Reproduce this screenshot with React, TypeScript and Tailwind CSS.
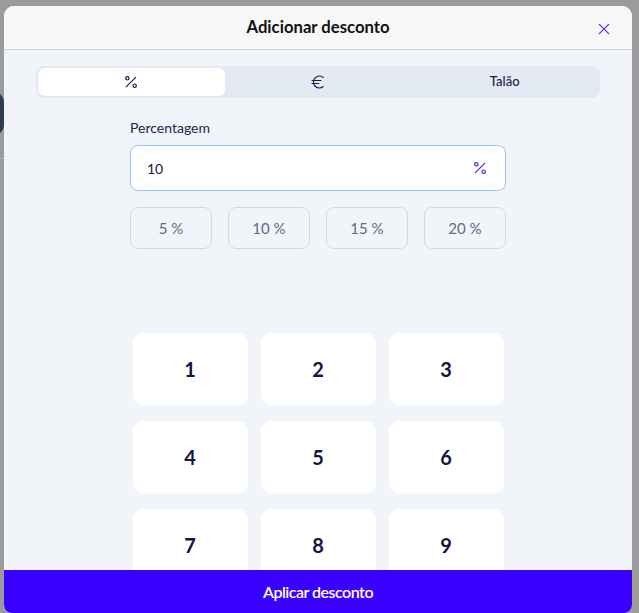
import React from "react";

const PercentIcon = ({ className }: { className?: string }) => (
  <svg viewBox="0 0 24 24" fill="none" stroke="currentColor" strokeWidth="1.8" strokeLinecap="round" strokeLinejoin="round" className={className}>
    <line x1="19" y1="5" x2="5" y2="19" />
    <circle cx="6.5" cy="6.5" r="2.5" />
    <circle cx="17.5" cy="17.5" r="2.5" />
  </svg>
);

const EuroIcon = ({ className }: { className?: string }) => (
  <svg viewBox="0 0 24 24" fill="none" stroke="currentColor" strokeWidth="1.5" strokeLinecap="round" strokeLinejoin="round" className={className}>
    <path d="M4 10h12" />
    <path d="M4 14h9" />
    <path d="M19 6a7.7 7.7 0 0 0-5.2-2A7.9 7.9 0 0 0 6 12c0 4.4 3.5 8 7.8 8 2 0 3.8-.8 5.2-2" />
  </svg>
);

const XIcon = ({ className }: { className?: string }) => (
  <svg viewBox="0 0 24 24" fill="none" stroke="currentColor" strokeWidth="1.6" strokeLinecap="round" className={className}>
    <path d="M5 5l14 14M19 5L5 19" />
  </svg>
);

export default function App() {
  const presets = ["5 %", "10 %", "15 %", "20 %"];
  const keys = ["1", "2", "3", "4", "5", "6", "7", "8", "9"];
  return (
    <div
      className="relative w-[639px] h-[613px] overflow-hidden bg-[#9b9b9b]"
      style={{ fontFamily: "Lato, 'Noto Sans', sans-serif" }}
    >
      {/* background content peeking at left */}
      <div className="absolute left-[-20px] top-[92px] w-[24px] h-[43px] rounded-[10px] bg-[#2f3d50]" />
      <div className="absolute left-0 top-[158px] w-[4px] h-[1px] bg-[#b5b5b5]" />

      <div className="absolute left-[4px] top-[6px] w-[628px] h-[607px] rounded-t-[10px] rounded-b-[8px] overflow-hidden flex flex-col bg-[#f1f4f9]">
        {/* header */}
        <div className="relative h-[44px] shrink-0 flex items-center justify-center bg-[#f7f7f7] border-b border-[#cfd2d6]">
          <span className="text-[16.7px] font-bold text-[#111111]">Adicionar desconto</span>
          <XIcon className="absolute right-[20px] top-[15px] w-[16px] h-[16px] text-[#4b1cff]" />
        </div>

        {/* body */}
        <div className="flex-1 overflow-hidden px-8 pt-4">
          <div className="flex h-[32px] rounded-[8px] bg-[#e4eaf3] p-[2px]">
            <div className="flex-1 flex items-center justify-center rounded-[6px] bg-white shadow-[0_0_1px_rgba(0,0,0,0.15)] text-[#1b1b47]">
              <PercentIcon className="w-[16px] h-[16px]" />
            </div>
            <div className="flex-1 flex items-center justify-center text-[#1b1b47]">
              <EuroIcon className="w-[18px] h-[18px]" />
            </div>
            <div className="flex-1 flex items-center justify-center text-[13px] font-medium text-[#1b1b47]">
              Talão
            </div>
          </div>

          <div className="w-[376px] mx-auto">
            <div className="mt-[20px] h-[20px] text-[14px] leading-[20px] text-[#24244a]">Percentagem</div>
            <div className="mt-[7px] h-[46px] flex items-center justify-between rounded-[8px] border border-[#9cc3f5] bg-white pl-[16px] pr-[17px]">
              <span className="text-[14px] text-[#1b1b3a]">10</span>
              <PercentIcon className="w-[16px] h-[16px] text-[#4b1cff]" />
            </div>
            <div className="mt-[16px] grid grid-cols-4 gap-[16px]">
              {presets.map((p) => (
                <div
                  key={p}
                  className="h-[42px] flex items-center justify-center rounded-[8px] border border-[#d5dae2] text-[15px] text-[#5d6c83]"
                >
                  {p}
                </div>
              ))}
            </div>
          </div>

          <div className="w-[371px] mx-auto mt-[84px] grid grid-cols-3 gap-x-[13px] gap-y-[16px]">
            {keys.map((k) => (
              <div
                key={k}
                className="h-[72px] flex items-center justify-center rounded-[10px] bg-white text-[20px] font-bold text-[#15153f]"
              >
                {k}
              </div>
            ))}
          </div>
        </div>

        {/* footer button */}
        <div className="h-[43px] shrink-0 flex items-center justify-center bg-[#3a00ff] text-white text-[16px] font-semibold tracking-[-0.5px]">
          Aplicar desconto
        </div>
      </div>
    </div>
  );
}
